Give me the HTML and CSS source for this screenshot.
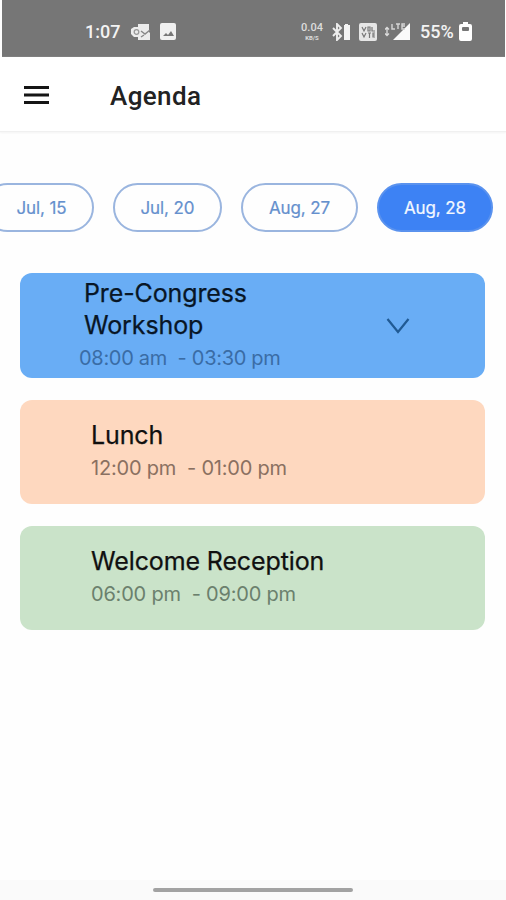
FILE: index.html
```html
<!DOCTYPE html>
<html lang="en">
<head>
<meta charset="utf-8">
<meta name="viewport" content="width=device-width, initial-scale=1">
<title>Agenda</title>
<link rel="stylesheet" href="styles.css">
</head>
<body>
<div class="screen">
  <div class="status">
    <span class="clock">1:07</span>
    <svg class="mail" width="20" height="18" viewBox="0 0 20 18"><path fill="#ececec" d="M7 1h11v8l1 1v7H7v-3H3L0 11V6l3-2h4z"/><circle cx="5.500" cy="9" r="2.300" fill="none" stroke="#999" stroke-width="1.300"/><path d="M10 8l4 3 5-4M10 14l3-2" fill="none" stroke="#888" stroke-width="1.400"/></svg>
    <svg class="photo" width="16" height="17" viewBox="0 0 16 17"><rect width="16" height="17" rx="2" fill="#f0f0f0"/><path d="M3 13l3-3 2 2 3-4 3 5z" fill="#777"/></svg>
    <span class="speed"><b>0.04</b><small>KB/S</small></span>
    <svg class="bt" width="19" height="18" viewBox="0 0 19 18"><path d="M1 5l8 8-4 4V1l4 4-8 8" fill="none" stroke="#eee" stroke-width="1.900"/><path d="M13 1h3v1h2v15h-6V2h1z" fill="#f5f5f5"/></svg>
    <svg class="volte" width="18" height="18" viewBox="0 0 18 18"><rect width="18" height="18" rx="2" fill="#e6e6e6"/><path d="M3 4l2 4 2-4M9 4h2v4H9zM13 4v4h3M3 10l2 4 2-4M9 10h3M10.500 10v5M16 10h-2v4h2M14 12h2" fill="none" stroke="#777" stroke-width="1.200"/></svg>
    <svg class="signal" width="26" height="19" viewBox="0 0 26 19"><path d="M25 1v17H8z" fill="#fafafa"/><path d="M2 6v7M0 7.500l2-2 2 2M0 11.500l2 2 2-2" fill="none" stroke="#ddd" stroke-width="1.300"/><path d="M7 2v5h3M13 2v5M11 2h4M20 2h-3v5h3M17 4h3" fill="none" stroke="#d5d5d5" stroke-width="1.400"/></svg>
    <span class="percent">55%</span>
    <svg class="battery" width="13" height="19" viewBox="0 0 13 19"><path d="M4 0h5v2h2q2 0 2 2v13q0 2-2 2H2q-2 0-2-2V4q0-2 2-2h2z" fill="#fff"/><rect x="3" y="5" width="7" height="4" rx="1" fill="#777"/></svg>
  </div>
  <header class="bar">
    <svg class="menu" width="25" height="18" viewBox="0 0 25 18"><path d="M0 1.500h25M0 9h25M0 16.500h25" stroke="#151515" stroke-width="2.800"/></svg>
    <h1>Agenda</h1>
  </header>
  <nav class="dates">
    <a class="chip first"><span>Jul, 15</span></a>
    <a class="chip second"><span>Jul, 20</span></a>
    <a class="chip"><span>Aug, 27</span></a>
    <a class="chip active"><span>Aug, 28</span></a>
  </nav>
  <main class="cards">
    <section class="card blue">
      <div class="info"><h2>Pre-Congress<br>Workshop</h2><p>08:00 am&nbsp; - 03:30 pm</p></div>
      <svg class="chevron" width="24" height="18" viewBox="0 0 24 18"><path d="M1.500 2L12 15 22.500 2" fill="none" stroke="#205a94" stroke-width="2.200"/></svg>
    </section>
    <section class="card peach"><div class="info"><h2>Lunch</h2><p>12:00 pm&nbsp; - 01:00 pm</p></div></section>
    <section class="card green"><div class="info"><h2>Welcome Reception</h2><p>06:00 pm&nbsp; - 09:00 pm</p></div></section>
  </main>
  <footer class="gesture"><i></i></footer>
</div>
</body>
</html>
```
FILE: styles.css
```css
* { box-sizing: border-box; }
body { margin: 0; background: #fff; font-family: Inter, "Liberation Sans", sans-serif; }
h1, h2, p { margin: 0; font-weight: 400; white-space: nowrap; }
svg { display: block; flex: none; }
.screen { height: 900px; width: 506px; overflow: hidden; display: flex; flex-direction: column; background: #fefefe; }
.status { height: 57px; flex: none; margin: 0 1px 0 2px; padding: 6px 33px 0 83px; background: #767676; display: flex; align-items: center; color: #f3f3f3; font-family: Roboto, sans-serif; }
.clock { font-size: 18px; font-weight: 500; width: 46px; }
.photo { margin-left: 9px; }
.speed { margin-left: auto; width: 22px; display: flex; flex-direction: column; align-items: center; color: #ddd; }
.speed b { font-size: 11px; line-height: 13px; font-weight: 500; }
.speed small { font-size: 6px; line-height: 8px; font-weight: 700; }
.bt { margin-left: 9px; }
.volte { margin-left: 8px; }
.signal { margin-left: 8px; }
.percent { margin-left: 9px; font-size: 18px; font-weight: 500; width: 36px; }
.battery { margin-left: 3px; }
.bar { height: 75px; flex: none; display: flex; align-items: center; padding: 2px 0 0 24px; background: #fff; border-bottom: 1px solid #f0f0f0; box-shadow: 0 1px 2px #f3f3f3; }
.bar h1 { margin: 2px 0 0 61px; font-family: Roboto, sans-serif; font-size: 26px; font-weight: 500; letter-spacing: .4px; color: #222; }
.dates { height: 49px; flex: none; margin: 51px 0 0 -17px; display: flex; gap: 19px; }
.chip { height: 49px; width: 117px; flex: none; border: 2px solid #9ab5df; border-radius: 25px; display: flex; align-items: center; justify-content: center; font-size: 17px; letter-spacing: -.1px; -webkit-text-stroke: .2px; color: #6590cd; }
.chip.first { width: 111px; padding-left: 6px; }
.chip.second { width: 109px; }
.chip.active { width: 116px; background: #3d82f4; border-color: #5a92ee; color: #f3f8ff; }
.cards { margin: 41px 21px 0 20px; display: flex; flex-direction: column; gap: 22px; }
.card { height: 104px; border-radius: 12px; display: flex; padding-left: 71px; align-items: center; }
.card h2 { font-size: 25px; line-height: 32px; letter-spacing: -.12px; color: #101010; -webkit-text-stroke: .25px; }
.card p { font-size: 20px; line-height: 34px; letter-spacing: -.2px; }
.blue { background: #69adf5; padding-left: 59px; height: 105px; }
.blue h2 { padding-left: 5px; color: #081626; }
.blue p { color: #3a6ca5; letter-spacing: -.3px; }
.peach { background: #fed8bf; }
.peach p { color: #8a7061; }
.green { background: #cae3c9; }
.green p { color: #6b806d; }
.chevron { margin: 0 75px 0 auto; }
.gesture { height: 20px; margin-top: auto; background: #fafafa; display: flex; justify-content: center; align-items: center; }
.gesture i { width: 200px; height: 4px; border-radius: 2px; background: #a2a2a2; }
```
